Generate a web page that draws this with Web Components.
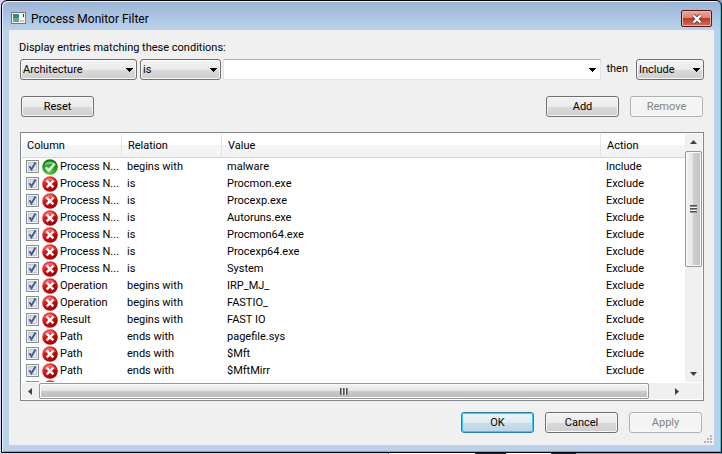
<!DOCTYPE html>
<html lang="en">
<head>
<meta charset="utf-8">
<title>Process Monitor Filter</title>
<style>
html, body { margin: 0; height: 100%; overflow: hidden; }
body { background: linear-gradient(90deg, #d9d3f3 0 388px, #555 388px 389px, #fff 389px 475px, #222 475px 506px, #fff 506px 551px, #222 551px 576px, #9a9ab8 576px); font: 11px/16px Roboto, "Liberation Sans", sans-serif; color: #000; }
</style>
</head>
<body>
<filter-window caption="Process Monitor Filter">
  <condition-bar></condition-bar>
  <filter-list></filter-list>
  <button-row slot="footer"></button-row>
</filter-window>

<script>
const define = (name, html, setup) => {
  const template = document.createElement('template');
  template.innerHTML = html;
  customElements.define(name, class extends HTMLElement {
    constructor() {
      super();
      this.attachShadow({ mode: 'open' }).append(template.content.cloneNode(true));
    }
    connectedCallback() { if (setup) setup(this, this.shadowRoot); }
  });
};

define('push-button', `
<style>
:host { display: block; width: 73px; flex: none; }
button { display: block; box-sizing: border-box; width: 100%; height: 21px; padding: 0; font: inherit; line-height: 17px; color: #000; border: 1px solid #707070; border-radius: 3px; background: linear-gradient(#f3f3f3, #ebebeb 50%, #dadada 50%, #cfcfcf); box-shadow: inset 0 0 0 1px #f8f8f8; }
button:disabled { color: #838383; border-color: #adb2b5; background: #f4f4f4; }
:host([primary]) button { border-color: #2a80ab; background: linear-gradient(#edf4f8, #deebf2 50%, #c9dfea 50%, #bbd5e5); box-shadow: inset 0 0 0 1px #38ccf3; }
</style>
<button type="button"><slot></slot></button>`,
(host, root) => { root.querySelector('button').disabled = host.hasAttribute('disabled'); });

define('drop-down', `
<style>
:host { display: block; position: relative; flex: none; }
select { display: block; appearance: none; box-sizing: border-box; width: 100%; height: 21px; margin: 0; padding: 0 16px 0 2px; font: inherit; line-height: 17px; color: #000; border: 1px solid #707070; border-radius: 3px; background: linear-gradient(#f3f3f3, #ebebeb 50%, #dadada 50%, #cfcfcf); box-shadow: inset 0 0 0 1px #f8f8f8; }
svg { position: absolute; right: 4px; top: 9px; pointer-events: none; }
</style>
<select><option></option></select>
<svg width="8" height="4" shape-rendering="crispEdges"><path d="M0 0h8L4 4z"/></svg>`,
(host, root) => {
  root.querySelector('option').textContent = host.getAttribute('value');
  root.querySelector('select').setAttribute('aria-label', host.getAttribute('label'));
});

define('value-box', `
<style>
:host { display: flex; flex: 1; min-width: 0; box-sizing: border-box; height: 21px; background: #fff; border: 1px solid #e2e3ea; border-top-color: #abadb3; border-radius: 1px; }
input { flex: 1; min-width: 0; border: 0; padding: 0 3px; font: inherit; background: none; outline: none; }
button { width: 16px; padding: 0; border: 0; background: none; display: grid; place-items: center; }
</style>
<input type="text" aria-label="Value"><button type="button" aria-label="Show values"><svg width="8" height="4" shape-rendering="crispEdges"><path d="M0 0h8L4 4z"/></svg></button>`);

define('condition-bar', `
<style>
:host { display: block; padding: 10px 10px 0 11px; }
p { margin: 0 0 3px -1px; }
div { display: flex; align-items: center; }
.arch { width: 117px; margin-right: 3px; }
.rel { width: 81px; margin-right: 2px; }
.act { width: 68px; }
span { padding: 0 8px 1px 5px; }
.buttons { gap: 11px; margin: 16px 1px 15px; }
.buttons push-button:first-child { margin-right: auto; }
</style>
<p>Display entries matching these conditions:</p>
<div>
  <drop-down class="arch" value="Architecture" label="Column"></drop-down>
  <drop-down class="rel" value="is" label="Relation"></drop-down>
  <value-box></value-box>
  <span>then</span>
  <drop-down class="act" value="Include" label="Action"></drop-down>
</div>
<div class="buttons">
  <push-button>Reset</push-button>
  <push-button>Add</push-button>
  <push-button disabled>Remove</push-button>
</div>`);

define('state-icon', `
<style>
:host { display: block; width: 16px; height: 16px; flex: none; }
svg { display: block; }
:host([kind="Include"]) .no, :host([kind="Exclude"]) .yes { display: none; }
</style>
<svg width="16" height="16" viewBox="0 0 16 16" aria-hidden="true">
  <defs>
    <radialGradient id="g" cx=".45" cy=".75" r=".75"><stop offset="0" stop-color="#5fe03c"/><stop offset=".5" stop-color="#2aa325"/><stop offset="1" stop-color="#0c6b16"/></radialGradient>
    <linearGradient id="r" x1="0" y1="0" x2=".7" y2="1"><stop offset="0" stop-color="#ff6a68"/><stop offset=".45" stop-color="#dc1519"/><stop offset="1" stop-color="#920006"/></linearGradient>
  </defs>
  <g class="yes"><circle cx="8" cy="8" r="7.8" fill="url(#g)"/><path d="M2.2 6.5a6.2 6.2 0 0 1 11.6 0Q8 3.500 2.200 6.500z" fill="#b4eca5" opacity=".6"/><path d="M3.700 8.200l3.200 3.300 5.600-6.700" fill="none" stroke="#fff" stroke-width="2.200"/></g>
  <g class="no"><circle cx="8" cy="8" r="7.800" fill="url(#r)"/><path d="M2.200 6a6.200 6.200 0 0 1 11.600 0Q8 3 2.200 6z" fill="#ffb1ae" opacity=".5"/><path d="M4.700 4.700l6.600 6.600M11.300 4.700l-6.600 6.600" stroke="#fff" stroke-width="2.500"/></g>
</svg>`);

define('tick-box', `
<style>
:host { display: block; position: relative; width: 13px; height: 13px; flex: none; }
input { display: block; appearance: none; box-sizing: border-box; width: 13px; height: 13px; margin: 0; border: 1px solid #8e8f8f; background: linear-gradient(135deg, #cdd2d9, #f3f4f6); box-shadow: inset 0 0 0 1px #f4f4f4, inset 0 0 0 2px #c3c8ce; }
svg { position: absolute; inset: 0; pointer-events: none; }
</style>
<input type="checkbox" checked>
<svg width="13" height="13"><path d="M3.500 6.200l2 3.300 4-7" fill="none" stroke="#3f5a9c" stroke-width="1.900"/></svg>`,
(host, root) => root.querySelector('input').setAttribute('aria-label', host.getAttribute('label')));

define('scroll-bar', `
<style>
:host { display: flex; background: #f0f0f0; }
:host([axis="y"]) { flex-direction: column; }
button { flex: none; width: 17px; height: 17px; padding: 0; border: 0; background: none; display: grid; place-items: center; }
:host([axis="y"]) button { width: 16px; }
:host([axis="x"]) button { height: 16px; }
.track { flex: 1; display: flex; min-width: 0; min-height: 0; }
:host([axis="y"]) .track { flex-direction: column; }
.thumb { box-sizing: border-box; border: 1px solid #979797; border-radius: 2px; display: grid; place-items: center; box-shadow: inset 0 0 0 1px #fafafa; }
:host([axis="x"]) .thumb { width: 97%; background: linear-gradient(#f4f4f4, #e4e4e4 48%, #cbcbcb 50%, #bbb); }
:host([axis="y"]) .thumb { height: 54%; background: linear-gradient(90deg, #f4f4f4, #e4e4e4 48%, #cfcfcf 50%, #c2c2c2); }
.grip { width: 8px; height: 7px; background: repeating-linear-gradient(90deg, #505050 0 1px, #8f8f8f 1px 2px, #eee 2px 3px); }
:host([axis="y"]) .grip { width: 7px; height: 8px; background: repeating-linear-gradient(#505050 0 1px, #8f8f8f 1px 2px, #eee 2px 3px); }
svg { fill: #404040; }
:host([axis="y"]) svg { transform: rotate(90deg); }
</style>
<button type="button" aria-label="Scroll back"><svg width="7" height="7"><path d="M5 0v7L1 3.500z"/></svg></button>
<div class="track"><div class="thumb"><div class="grip"></div></div></div>
<button type="button" aria-label="Scroll forward"><svg width="7" height="7"><path d="M2 0v7l4-3.500z"/></svg></button>`);

define('filter-list', `
<style>
:host { box-sizing: border-box; flex: 1; min-height: 0; margin: 0 10px 0 11px; border: 1px solid #828790; background: #fff; padding: 1px; display: grid; grid-template: minmax(0, 1fr) 16px / minmax(0, 1fr) 17px; row-gap: 1px; font: 11px/17px Roboto, "Liberation Sans", sans-serif; }
.view { overflow: hidden; }
table { width: 100%; table-layout: fixed; border-collapse: separate; border-spacing: 0; }
th { box-sizing: border-box; height: 24px; padding: 0 0 0 6px; text-align: left; font-weight: normal; border-right: 1px solid #dfe2e6; border-bottom: 1px solid #d5d5d5; background: linear-gradient(#fff 45%, #f4f5f7 50%, #f1f2f4); }
th:first-child { padding-left: 5px; }
th:last-child { border-right: 0; }
td { height: 17px; padding: 0 0 0 5px; white-space: nowrap; }
td:first-child { padding-left: 4px; }
.entry { display: flex; align-items: center; height: 17px; }
.entry state-icon { margin: 0 2px 0 3px; }
.corner { background: #f0f0f0; }
</style>
<div class="view"><table>
  <colgroup><col style="width:100px"><col style="width:100px"><col><col style="width:84px"></colgroup>
  <thead><tr><th>Column</th><th>Relation</th><th>Value</th><th>Action</th></tr></thead>
  <tbody></tbody>
</table></div>
<scroll-bar axis="y"></scroll-bar>
<scroll-bar axis="x"></scroll-bar>
<div class="corner"></div>`,
(host, root) => {
  const rows = [
    ['Process N...', 'begins with', 'malware', 'Include'],
    ['Process N...', 'is', 'Procmon.exe', 'Exclude'],
    ['Process N...', 'is', 'Procexp.exe', 'Exclude'],
    ['Process N...', 'is', 'Autoruns.exe', 'Exclude'],
    ['Process N...', 'is', 'Procmon64.exe', 'Exclude'],
    ['Process N...', 'is', 'Procexp64.exe', 'Exclude'],
    ['Process N...', 'is', 'System', 'Exclude'],
    ['Operation', 'begins with', 'IRP_MJ_', 'Exclude'],
    ['Operation', 'begins with', 'FASTIO_', 'Exclude'],
    ['Result', 'begins with', 'FAST IO', 'Exclude'],
    ['Path', 'ends with', 'pagefile.sys', 'Exclude'],
    ['Path', 'ends with', '$Mft', 'Exclude'],
    ['Path', 'ends with', '$MftMirr', 'Exclude'],
    ['', '', '', 'Exclude', true]
  ];
  root.querySelector('tbody').innerHTML = rows.map(([column, relation, value, action, blank]) =>
    `<tr><td><div class="entry"><tick-box label="${column} ${relation} ${value}"></tick-box><state-icon kind="${action}"></state-icon><span>${column}</span></div></td><td>${relation}</td><td>${value}</td><td>${blank ? '' : action}</td></tr>`).join('');
});

define('button-row', `
<style>
:host { display: flex; justify-content: flex-end; gap: 11px; padding: 11px 12px 12px 11px; }
</style>
<push-button primary>OK</push-button>
<push-button>Cancel</push-button>
<push-button disabled>Apply</push-button>`);

define('filter-window', `
<style>
:host { display: flex; flex-direction: column; box-sizing: border-box; height: calc(100vh - 1px); margin-left: 1px; border: 1px solid #000; border-radius: 6px 6px 0 0; background: linear-gradient(#9ab5d4, #b9d1ea 28px, #b9d1ea); box-shadow: inset 1px 1px #e4f1fb, inset -1px -1px #35c5e4; padding: 1px 7px 7px; }
header { display: flex; align-items: center; height: 28px; flex: none; font: 12px/18px Roboto, "Liberation Sans", sans-serif; }
.logo { margin: 0 5px 0 2px; padding-top: 4px; }
h1 { flex: 1; margin: 0; font: inherit; padding-top: 5px; }
.close { width: 31px; height: 17px; margin: 5px 2px 0 0; padding: 0; display: grid; place-items: center; border: 1px solid #51181c; border-radius: 2px; background: linear-gradient(#e8a79d, #dc8275 48%, #bb3a26 50%, #d2705c); box-shadow: inset 0 0 0 1px #efb5ac; }
main { flex: 1; min-height: 0; display: flex; flex-direction: column; background: #f0f0f0; position: relative; }
.grip { position: absolute; right: 2px; bottom: 2px; fill: #b5b5b5; }
</style>
<header>
  <svg class="logo" width="15" height="12" shape-rendering="crispEdges" aria-hidden="true"><path d="M0 0h15v12H0z" fill="#777"/><path d="M1 1h13v10H1z" fill="#f8faf9"/><path d="M2 2h6v8H2z" fill="#3d849a"/><path d="M2 6h6v4H2z" fill="#64ab78"/><path d="M9 8h4v2H9z" fill="#ccc"/><path d="M12 2h1v3h-1z" fill="#333"/></svg>
  <h1></h1>
  <button class="close" type="button" aria-label="Close"><svg width="12" height="10"><path d="M2.500 1.500l7 7M9.500 1.500l-7 7" stroke="#54414b" stroke-width="4.200"/><path d="M2.500 1.500l7 7M9.500 1.500l-7 7" stroke="#fff" stroke-width="2.400"/></svg></button>
</header>
<main>
  <slot></slot>
  <slot name="footer"></slot>
  <svg class="grip" width="8" height="8" shape-rendering="crispEdges"><path d="M6 0h2v2h-2zM3 3h2v2h-2zM6 3h2v2h-2zM0 6h2v2h-2zM3 6h2v2h-2zM6 6h2v2h-2z"/></svg>
</main>`,
(host, root) => { root.querySelector('h1').textContent = host.getAttribute('caption'); });
</script>
</body>
</html>
